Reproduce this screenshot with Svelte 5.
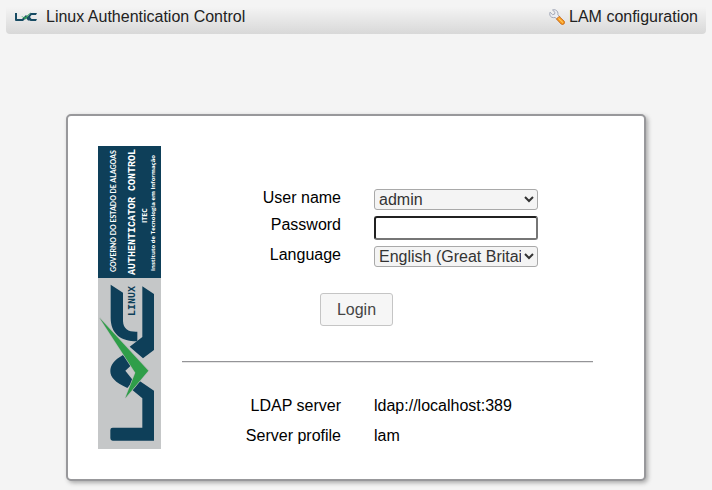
<script>
  const profiles = ['admin'];
  const languages = ['English (Great Britain)'];
  let user = $state('admin');
  let language = $state(languages[0]);
  let password = $state('');
</script>

<header>
  <a class="brand" href="#home">
    <svg width="24" height="10" viewBox="0 0 24 10" aria-hidden="true">
      <path d="M1 1H3V7H8L12 3 17 8.500H14L12 6 9 9H2Q1 9 1 8z" fill="#174b63" />
      <path d="M23 1 22 3H17.500L16 5 17.500 7H23L22 9H16.500L13.500 5 16.500 1z" fill="#174b63" />
      <path d="M7 4 11 5.500 17 0 11.500 7.500z" fill="#35a35a" />
    </svg>
    <span>Linux Authentication Control</span>
  </a>
  <a class="config" href="#configuration">
    <svg width="16" height="16" viewBox="0 0 16 16" aria-hidden="true">
      <path d="M3.500 1 6 3.400 5.500 5.200 3.600 5.700 1 3.200C.3 5.200.9 7.500 2.800 8.300c1.100.5 2.200.4 3.200.1l2.200 2.100 2.700-2.700-2-2C9.300 3.700 8.400 1.700 6.600 1 5.500.600 4.400.600 3.500 1z" fill="#eceef3" stroke="#a3a8b8" stroke-width="1" />
      <path d="M7.500 10 10.100 7.400 15.200 12.300Q16 13.800 14.800 15 13.500 16 12.200 15z" fill="#f9a01e" stroke="#c8691d" stroke-width="1" />
      <path d="M9.500 9.300 13.900 13.500" stroke="#ffd079" stroke-width="1" />
    </svg>
    <span>LAM configuration</span>
  </a>
</header>

<main>
  <svg class="logo" width="63" height="303" viewBox="0 0 63 303" role="img" aria-label="Linux Authenticator Control">
    <rect width="63" height="303" fill="#c5c7c8" />
    <rect width="63" height="132" fill="#0e3f59" />
    <g fill="#fff" font-family="'Open Sans', sans-serif" font-weight="700">
      <text transform="translate(18 126) rotate(-90)" font-size="7" font-family="Lato, sans-serif">GOVERNO DO ESTADO DE ALAGOAS</text>
      <text class="dots" transform="translate(37 129) rotate(-90)" font-size="10">AUTHENTICATOR CONTROL</text>
      <text transform="translate(49 77) rotate(-90)" font-size="7">ITEC</text>
      <text transform="translate(57 125) rotate(-90)" font-size="6">Instituto de Tecnologia em Informação</text>
    </g>
    <text class="dots" transform="translate(37 170) rotate(-90)" font-size="10" fill="#0e3f59">LINUX</text>
    <g transform="translate(0 0) scale(.3333)">
      <g fill="#0e3f59">
        <path d="M38 416 75 440V525C76 550 92 558 118 557V586C65 586 38 560 38 515z" />
        <path d="M133 421 168 444V612L135 637 95 602 133 573z" />
        <path d="M75 627C48 642 37 658 37 675 37 694 50 708 88 726L106 704 82 674 103 655z" />
        <path d="M125 705 168 734V884H44Q37 884 37 877V852Q37 845 44 845H133V757L103 732z" />
      </g>
      <path d="M5 516 151 674 82 756 112 680z" fill="#2f9e49" stroke="#b4bab8" stroke-width="4" paint-order="stroke" />
    </g>
  </svg>

  <div class="content">
    <form onsubmit={(e) => e.preventDefault()}>
      <div class="row">
        <label for="user">User name</label>
        <select id="user" bind:value={user}>
          {#each profiles as p}<option>{p}</option>{/each}
        </select>
      </div>
      <div class="row password">
        <label for="password">Password</label>
        <input id="password" type="password" bind:value={password} />
      </div>
      <div class="row">
        <label for="language">Language</label>
        <select id="language" bind:value={language}>
          {#each languages as l}<option>{l}</option>{/each}
        </select>
      </div>
      <button type="submit">Login</button>
    </form>
    <hr />
    <dl>
      <dt>LDAP server</dt>
      <dd>ldap://localhost:389</dd>
      <dt>Server profile</dt>
      <dd>lam</dd>
    </dl>
  </div>
</main>

<style>
  :global(body) {
    background: #f4f4f4;
    color: #000;
    font: 16px/18px 'Liberation Sans', Arial, sans-serif;
  }
  header {
    display: flex;
    justify-content: space-between;
    margin: 0 6px;
    padding: 8px;
    border-radius: 4px;
    background: linear-gradient(#f4f4f4 20%, #d8d8d8);
  }
  header a {
    display: flex;
    align-items: center;
    color: #222;
    text-decoration: none;
  }
  .brand { gap: 8px; }
  .config { gap: 4px; }
  main {
    display: flex;
    margin: 80px 66px 0;
    padding: 30px;
    border: 2px solid #98989b;
    border-radius: 5px;
    background: #fff;
    box-shadow: 2px 2px 4px #aaa;
  }
  :global(#app) { padding-bottom: 8px; }
  .logo {
    flex: none;
    display: block;
  }
  .dots {
    font-family: 'Liberation Mono', monospace;
    font-weight: 700;
  }
  .content {
    flex: 1;
    padding: 43px 21px 0;
  }
  .row {
    display: grid;
    grid-template-columns: 159px 164px;
    column-gap: 33px;
    align-items: start;
    height: 27px;
  }
  .row.password { height: 30px; }
  .row label, dt { text-align: right; }
  select, input {
    box-sizing: border-box;
    width: 100%;
    margin: 0;
    font: inherit;
    color: #333;
  }
  select {
    height: 21px;
    padding: 0;
    border: 1px solid #a9a9a9;
    border-radius: 3px;
    background: #f4f4f4;
  }
  input {
    height: 24px;
    padding: 1px 2px;
    border: 2px inset #767676;
    border-radius: 3px;
    background: #fff;
  }
  button {
    display: block;
    width: 73px;
    height: 33px;
    margin: 20px 0 0 138px;
    padding: 0;
    border: 1px solid #c5c5c5;
    border-radius: 3px;
    background: #f6f6f6;
    color: #454545;
    font: inherit;
  }
  hr {
    margin: 35px 0 34px;
    border: 0;
    border-top: 1px solid #949497;
    border-bottom: 1px solid #e6e6e6;
  }
  dl {
    display: grid;
    grid-template-columns: 159px 1fr;
    gap: 12px 33px;
    margin: 0;
  }
  dd { margin: 0; }
</style>
